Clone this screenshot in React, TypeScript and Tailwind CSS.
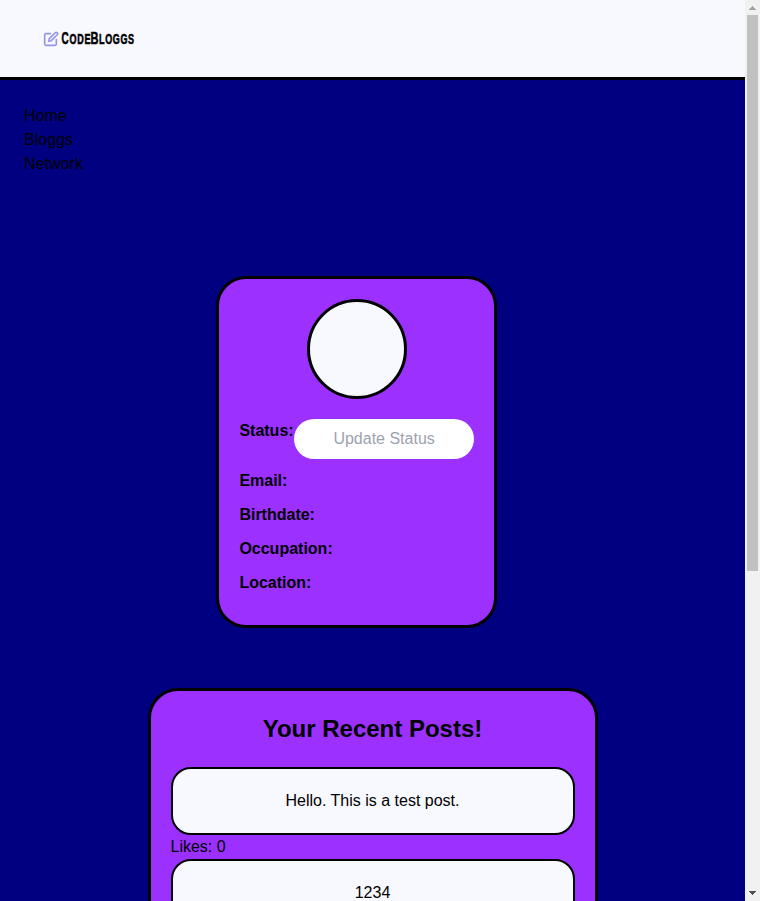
const details = ["Email:", "Birthdate:", "Occupation:", "Location:"];

function Logo() {
  return (
    <div className="flex items-center">
      <svg className="block h-4 w-4" viewBox="0 0 24 24" fill="none" stroke="#9694ea" strokeWidth="2.4" strokeLinecap="round" strokeLinejoin="round">
        <path d="M11 4H4.5a2 2 0 0 0-2 2v13.500a2 2 0 0 0 2 2h13.500a2 2 0 0 0 2-2V13" />
        <path d="M18.3 2.7a2.1 2.1 0 0 1 3 3L12.500 14.500l-4 1 1-4z" />
      </svg>
      <svg className="block h-5 w-[78px]" viewBox="0 0 78 20" fill="#000" stroke="#000" strokeWidth="0.6" fontFamily="'Liberation Sans', sans-serif" fontWeight="700">
        <text transform="translate(2.5 15.300) scale(.58 1)" fontSize="17">C</text>
        <text transform="translate(10.500 15.300) scale(.6 1)" fontSize="15" letterSpacing="1.300">ODE</text>
        <text transform="translate(31.500 15.300) scale(.65 1)" fontSize="17">B</text>
        <text transform="translate(40 15.300) scale(.6 1)" fontSize="15" letterSpacing="1.100">LOGGS</text>
      </svg>
    </div>
  );
}

function Scrollbar() {
  return (
    <div className="flex w-[15px] shrink-0 flex-col items-center justify-between bg-[#f1f1f1]">
      <div className="flex w-full flex-col items-center">
        <svg className="block h-[15px] w-[15px]" viewBox="0 0 15 15" shapeRendering="crispEdges">
          <path d="M7 6h1v1h1v1h1v1h1v1H4V9h1V8h1V7h1z" fill="#a3a3a3" />
        </svg>
        <div className="h-[556px] w-[11px] bg-[#c1c1c1]" />
      </div>
      <svg className="block h-[15px] w-[15px]" viewBox="0 0 15 15" shapeRendering="crispEdges">
        <path d="M4 5h7v1h-1v1H9v1H8v1H7V8H6V7H5V6H4z" fill="#505050" />
      </svg>
    </div>
  );
}

function Post({ text, likes }: { text: string; likes: number }) {
  return (
    <div>
      <div className="rounded-[20px] border-2 border-black bg-[#f8f8ff] p-5 text-center">{text}</div>
      <p>Likes: {likes}</p>
    </div>
  );
}

export default function App() {
  return (
    <div className="flex h-[901px] w-[760px] overflow-hidden bg-[#000080] font-['Liberation_Sans',Arial,sans-serif] text-base leading-6 text-black">
      <main className="min-w-0 flex-1">
        <header className="flex h-20 items-center border-b-[3px] border-black bg-[#f8f8ff] pl-[43px]">
          <Logo />
        </header>
        <nav className="flex flex-col px-6 pt-6">
          <a>Home</a>
          <a>Bloggs</a>
          <a>Network</a>
        </nav>
        <div className="flex justify-center pt-[100px] pr-8">
          <section className="rounded-[30px] border-[3px] border-black bg-[#9b30ff] p-5">
            <div className="mb-5 ml-[67.5px] h-[100px] w-[100px] rounded-full border-[3px] border-black bg-[#f8f8ff]" />
            <div className="mb-2.5 flex">
              <strong>Status:</strong>
              <input className="h-10 w-[180px] rounded-[20px] bg-white pl-px text-center placeholder:text-[#9ca3af]" placeholder="Update Status" />
            </div>
            {details.map((label) => (
              <p key={label} className="mb-2.5"><strong>{label}</strong></p>
            ))}
          </section>
        </div>
        <section className="mx-auto mt-[60px] w-[450px] rounded-[30px] border-[3px] border-black bg-[#9b30ff] p-5">
          <h2 className="mb-5 text-center text-2xl leading-9 font-bold">Your Recent Posts!</h2>
          <Post text="Hello. This is a test post." likes={0} />
          <Post text="1234" likes={0} />
        </section>
      </main>
      <Scrollbar />
    </div>
  );
}
